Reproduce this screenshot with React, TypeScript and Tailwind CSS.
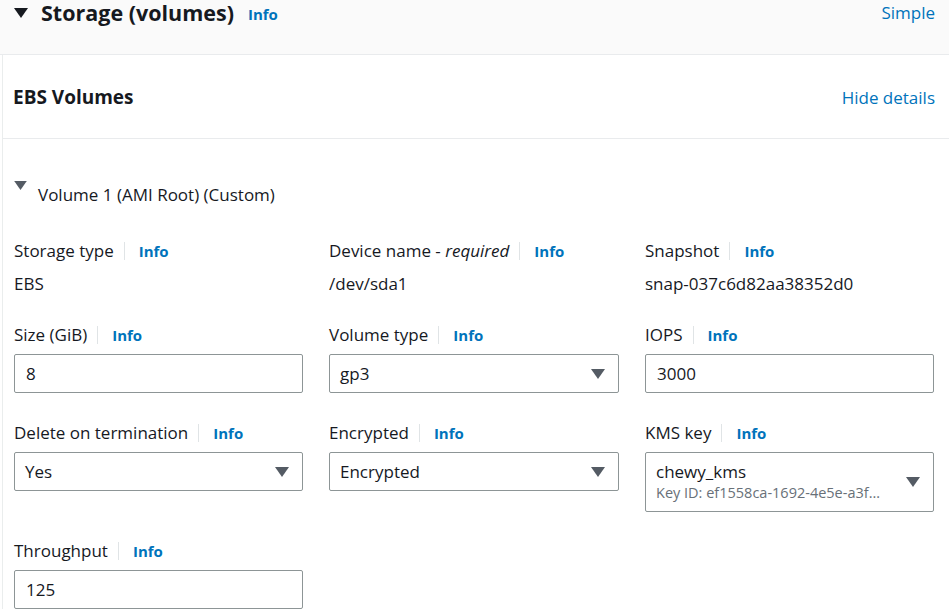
import React from 'react'

function Caret({ className }: { className: string }) {
  return (
    <svg viewBox="0 0 14 10" className={className}>
      <path d="M0 0 L14 0 L7 10 Z" fill="currentColor" />
    </svg>
  )
}

function Label({ text, italic }: { text: string; italic?: string }) {
  return (
    <div className="flex items-center h-[22px] text-[17px] leading-[22px] text-[#16191f]">
      <span>
        {text}
        {italic && <i> {italic}</i>}
      </span>
      <span className="ml-[10px] mr-[14px] h-[18px] w-px bg-[#e0e4e6]" />
      <span className="text-[15px] font-bold text-[#0073bb]">Info</span>
    </div>
  )
}

function TextInput({ value }: { value: string }) {
  return (
    <div className="mt-[8px] h-[39px] border border-[#8d9596] rounded-[2px] bg-white flex items-center px-[11px] text-[17px] text-[#16191f]">
      {value}
    </div>
  )
}

function Select({ value, sub }: { value: string; sub?: string }) {
  return (
    <div
      className={
        'mt-[8px] border border-[#8d9596] rounded-[2px] bg-white flex items-center justify-between pl-[10px] pr-[13px] ' +
        (sub ? 'h-[60px]' : 'h-[39px]')
      }
    >
      <div className="flex flex-col min-w-0">
        <span className="text-[17px] leading-[22px] text-[#16191f]">{value}</span>
        {sub && <span className="text-[14.5px] leading-[20px] text-[#687078] whitespace-nowrap">{sub}</span>}
      </div>
      <Caret className="w-[14px] h-[10px] text-[#545b64] shrink-0 ml-2" />
    </div>
  )
}

export default function App() {
  return (
    <div className="w-[949px] h-[616px] overflow-hidden bg-white text-[#16191f]" style={{ fontFamily: '"Open Sans", "Noto Sans", sans-serif' }}>
      {/* header */}
      <div className="h-[55px] bg-[#fafafa] border-b border-[#e9ebed] flex items-start justify-between pl-[14px] pr-[14px] pt-[1px]">
        <div className="flex items-center h-[24px]">
          <Caret className="w-[14px] h-[10px] text-[#16191f] mr-[13px]" />
          <span className="text-[21.5px] font-bold leading-[24px]">Storage (volumes)</span>
          <span className="ml-[14px] text-[15px] font-bold text-[#0073bb] mt-[2px]">Info</span>
        </div>
        <span className="text-[17px] leading-[24px] text-[#0073bb]">Simple</span>
      </div>

      <div className="ml-[2px] border-l border-[#eaeded]">
        {/* EBS volumes heading */}
        <div className="h-[84px] border-b border-[#e9ebed] flex items-center justify-between pl-[10px] pr-[14px] pt-[2px]">
          <span className="text-[19px] font-bold">EBS Volumes</span>
          <span className="text-[17px] text-[#0073bb]">Hide details</span>
        </div>

        {/* volume expander */}
        <div className="flex items-start pl-[11px] pt-[42px] h-[101px]">
          <Caret className="w-[13px] h-[9px] text-[#545b64] mr-[11px]" />
          <span className="text-[17px] leading-[22px] mt-[3px]">Volume 1 (AMI Root) (Custom)</span>
        </div>

        {/* grid of fields */}
        <div className="grid grid-cols-[289px_290px_289px] gap-x-[26px] gap-y-[29px] pl-[11px]">
          <div>
            <Label text="Storage type" />
            <div className="mt-[11px] text-[17px] leading-[22px]">EBS</div>
          </div>
          <div>
            <Label text="Device name -" italic="required" />
            <div className="mt-[11px] text-[17px] leading-[22px]">/dev/sda1</div>
          </div>
          <div>
            <Label text="Snapshot" />
            <div className="mt-[11px] text-[17px] leading-[22px]">snap-037c6d82aa38352d0</div>
          </div>

          <div>
            <Label text="Size (GiB)" />
            <TextInput value="8" />
          </div>
          <div>
            <Label text="Volume type" />
            <Select value="gp3" />
          </div>
          <div>
            <Label text="IOPS" />
            <TextInput value="3000" />
          </div>

          <div>
            <Label text="Delete on termination" />
            <Select value="Yes" />
          </div>
          <div>
            <Label text="Encrypted" />
            <Select value="Encrypted" />
          </div>
          <div>
            <Label text="KMS key" />
            <Select value="chewy_kms" sub="Key ID: ef1558ca-1692-4e5e-a3f…" />
          </div>

          <div className="-mt-[1px]">
            <Label text="Throughput" />
            <TextInput value="125" />
          </div>
        </div>
      </div>
    </div>
  )
}
